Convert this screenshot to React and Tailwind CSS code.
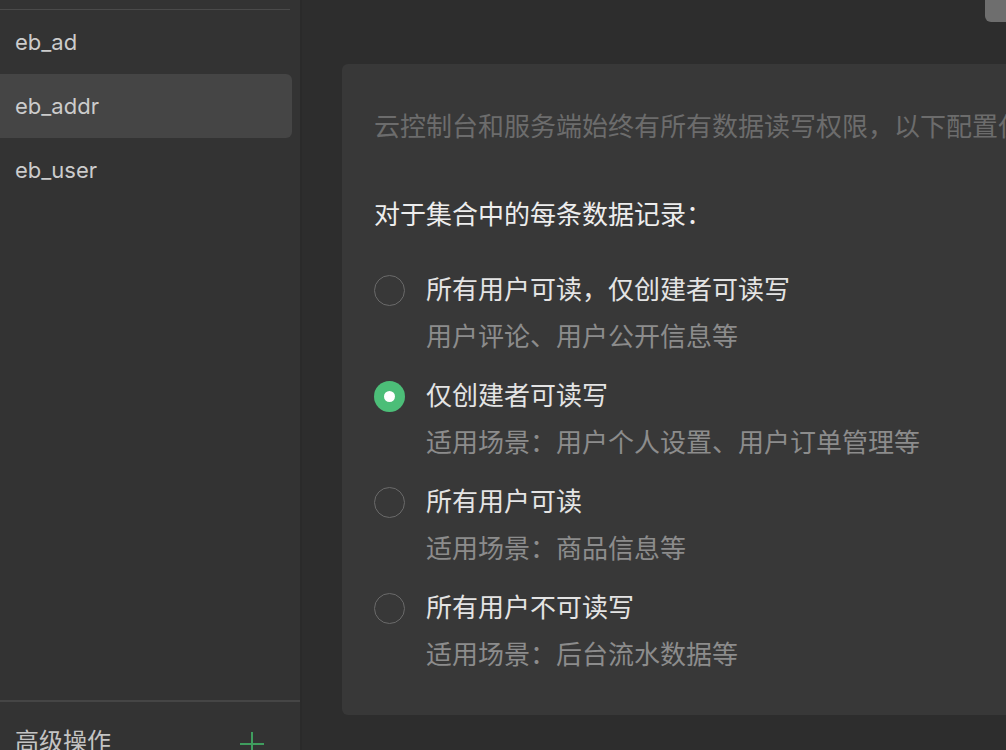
import React from 'react'

const collections = ['eb_ad', 'eb_addr', 'eb_user']

const options = [
  { title: '所有用户可读，仅创建者可读写', desc: '用户评论、用户公开信息等' },
  { title: '仅创建者可读写', desc: '适用场景：用户个人设置、用户订单管理等' },
  { title: '所有用户可读', desc: '适用场景：商品信息等' },
  { title: '所有用户不可读写', desc: '适用场景：后台流水数据等' },
]

const Radio = ({ checked }) => {
  if (checked) {
    return (
      <div className="w-[31px] h-[31px] rounded-full bg-[#4cbe78] flex items-center justify-center shrink-0">
        <div className="w-[11px] h-[11px] rounded-full bg-white" />
      </div>
    )
  }
  return <div className="w-[31px] h-[31px] rounded-full border border-[#6a6a6a] shrink-0" />
}

const Sidebar = ({ selected }) => {
  return (
    <aside className="w-[302px] h-full shrink-0 bg-[#333333] border-r-2 border-[#2a2a2a] flex flex-col">
      <div className="h-[9px]" />
      <div className="w-[290px] h-px bg-[#4a4a4a]" />
      <div className="flex flex-col">
        {collections.map((name) => (
          <div
            key={name}
            className={`w-[292px] h-[64px] flex items-center pl-[15px] text-[22px] text-[#cccccc] rounded-r-md ${
              name === selected ? 'bg-[#454545]' : ''
            }`}
          >
            {name}
          </div>
        ))}
      </div>
      <div className="flex-1" />
      <div className="h-[2px] bg-[#454545]" />
      <div className="h-[48px] flex items-start justify-between pl-[15px] pr-[35px] pt-[24px]">
        <span className="text-[24px] leading-[32px] text-[#c4c4c4]">高级操作</span>
        <svg width="26" height="26" viewBox="0 0 26 26" className="mt-[5px]">
          <path d="M13 1v24M1 13h24" stroke="#3f9d5e" strokeWidth="2" />
        </svg>
      </div>
    </aside>
  )
}

export default function App() {
  return (
    <div
      className="w-[1006px] h-[750px] flex overflow-hidden bg-[#2d2d2d]"
      style={{ fontFamily: 'Inter, "Noto Sans CJK SC", sans-serif' }}
    >
      <Sidebar selected="eb_addr" />
      <main className="flex-1 h-full overflow-hidden flex flex-col">
        <div className="h-[64px] flex shrink-0">
          <div className="w-[683px] shrink-0" />
          <div className="w-[80px] h-[22px] shrink-0 rounded-bl-md bg-[#6e6e6e]" />
        </div>
        <div className="pl-[40px]">
          <div className="w-[800px] h-[651px] rounded-md bg-[#383838] pl-[32px] pt-[45px]">
            <p className="text-[26px] leading-[36px] text-[#6c6c6c] whitespace-nowrap">
              云控制台和服务端始终有所有数据读写权限，以下配置仅对小程序端发起的请求有效。
            </p>
            <p className="mt-[52px] text-[26px] leading-[36px] text-[#ededed]">对于集合中的每条数据记录：</p>
            <div className="mt-[39px] flex flex-col gap-[23px]">
              {options.map((opt, i) => (
                <div key={opt.title} className="flex gap-[21px]">
                  <div className="h-[36px] flex items-center pt-px">
                    <Radio checked={i === 1} />
                  </div>
                  <div className="flex flex-col">
                    <span className="text-[26px] leading-[36px] text-[#e4e4e4]">{opt.title}</span>
                    <span className="mt-[11px] text-[26px] leading-[36px] text-[#8c8c8c]">{opt.desc}</span>
                  </div>
                </div>
              ))}
            </div>
          </div>
        </div>
      </main>
    </div>
  )
}
